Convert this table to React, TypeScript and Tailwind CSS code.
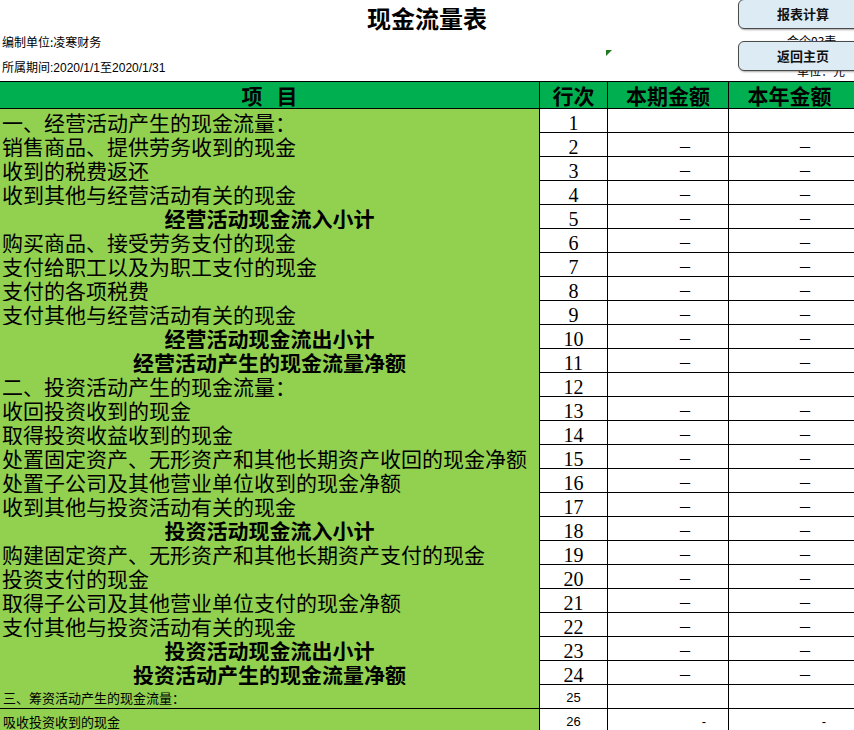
import React from "react";

type Row = {
	label: string;
	no: number;
	bold?: boolean;
	small?: boolean;
	dash?: boolean;
};

const rows: Row[] = [
	{ label: "一、经营活动产生的现金流量：", no: 1 },
	{ label: "销售商品、提供劳务收到的现金", no: 2, dash: true },
	{ label: "收到的税费返还", no: 3, dash: true },
	{ label: "收到其他与经营活动有关的现金", no: 4, dash: true },
	{ label: "经营活动现金流入小计", no: 5, bold: true, dash: true },
	{ label: "购买商品、接受劳务支付的现金", no: 6, dash: true },
	{ label: "支付给职工以及为职工支付的现金", no: 7, dash: true },
	{ label: "支付的各项税费", no: 8, dash: true },
	{ label: "支付其他与经营活动有关的现金", no: 9, dash: true },
	{ label: "经营活动现金流出小计", no: 10, bold: true, dash: true },
	{ label: "经营活动产生的现金流量净额", no: 11, bold: true, dash: true },
	{ label: "二、投资活动产生的现金流量：", no: 12 },
	{ label: "收回投资收到的现金", no: 13, dash: true },
	{ label: "取得投资收益收到的现金", no: 14, dash: true },
	{ label: "处置固定资产、无形资产和其他长期资产收回的现金净额", no: 15, dash: true },
	{ label: "处置子公司及其他营业单位收到的现金净额", no: 16, dash: true },
	{ label: "收到其他与投资活动有关的现金", no: 17, dash: true },
	{ label: "投资活动现金流入小计", no: 18, bold: true, dash: true },
	{ label: "购建固定资产、无形资产和其他长期资产支付的现金", no: 19, dash: true },
	{ label: "投资支付的现金", no: 20, dash: true },
	{ label: "取得子公司及其他营业单位支付的现金净额", no: 21, dash: true },
	{ label: "支付其他与投资活动有关的现金", no: 22, dash: true },
	{ label: "投资活动现金流出小计", no: 23, bold: true, dash: true },
	{ label: "投资活动产生的现金流量净额", no: 24, bold: true, dash: true },
	{ label: "三、筹资活动产生的现金流量：", no: 25, small: true },
	{ label: "吸收投资收到的现金", no: 26, small: true, dash: true },
];

const cjk = "font-['Noto_Sans_CJK_SC',sans-serif]";
const serif = "font-['Liberation_Serif','Noto_Sans_CJK_SC',serif]";
const sans = "font-['Liberation_Sans','Noto_Sans_CJK_SC',sans-serif]";

const SheetButton = ({ label, className }: { label: string; className: string }) => (
	<button
		className={`absolute left-[738px] w-[130px] rounded-[6px] border border-[#4a4a4a] bg-[#dcebf4] shadow-[1px_1px_2px_rgba(0,0,0,0.35)] flex items-center justify-center text-[13px] font-bold text-[#111] ${cjk} ${className}`}
	>
		{label}
	</button>
);

const TableRow = ({ row }: { row: Row }) => {
	const dashCls = row.small
		? `${sans} text-[13px] leading-none`
		: `${serif} text-[20px] leading-none`;
	return (
		<div className="grid grid-cols-[540px_68px_121px_125px] h-[24px] border-b border-black">
			<div
				className={`bg-[#92d050] border-r border-black flex items-center whitespace-nowrap text-black leading-none ${cjk} ${
					row.small
						? "text-[13px] pl-[3px] pt-[1px]"
						: row.bold
							? "text-[21px] font-bold justify-center pt-[3px]"
							: "text-[21px] pl-[2px] pt-[3px]"
				}`}
			>
				{row.label}
			</div>
			<div
				className={`border-r border-black flex items-center justify-center leading-none text-black ${
					row.small ? `${sans} text-[13px] pt-[1px]` : `${serif} text-[20px] pt-[3px]`
				}`}
			>
				{row.no}
			</div>
			<div
				className={`border-r border-black flex items-center justify-end ${dashCls} ${
					row.small ? "pr-[22px] pt-[2px]" : "pr-[38px] pt-[1px]"
				}`}
			>
				{row.dash ? (row.small ? "-" : "–") : ""}
			</div>
			<div
				className={`flex items-center justify-end ${dashCls} ${
					row.small ? "pr-[28px] pt-[2px]" : "pr-[44px] pt-[1px]"
				}`}
			>
				{row.dash ? (row.small ? "-" : "–") : ""}
			</div>
		</div>
	);
};

export default function App() {
	return (
		<div className="relative w-[854px] h-[730px] overflow-hidden bg-white text-black">
			{/* sheet heading */}
			<div className="h-[81px] flex flex-col">
				<div className={`h-[36px] flex items-center justify-center text-[24px] font-bold ${cjk}`}>
					现金流量表
				</div>
				<div className={`h-[12px] pl-[2px] flex items-center text-[12px] ${cjk}`}>
					编制单位:凌寒财务
				</div>
				<div className={`mt-[14px] h-[12px] pl-[2px] flex items-center text-[12px] ${sans}`}>
					所属期间:2020/1/1至2020/1/31
				</div>
			</div>

			<div className={`absolute left-[787px] top-[32px] text-[12px] ${cjk}`}>会企03表</div>
			<div className={`absolute left-[797px] top-[62px] text-[12px] ${cjk}`}>单位：元</div>

			<svg className="absolute left-[606px] top-[50px]" width="6" height="6" viewBox="0 0 6 6">
				<polygon points="0,0 6,0 0,6" fill="#1f7a1f" />
			</svg>

			<SheetButton label="报表计算" className="top-[-1px] h-[30px]" />
			<SheetButton label="返回主页" className="top-[41px] h-[30px]" />

			{/* table */}
			<div className="border-t border-black">
				<div
					className={`grid grid-cols-[540px_68px_121px_125px] h-[27px] border-b border-black bg-[#00b050] text-[21px] font-bold leading-none ${cjk}`}
				>
					<div className="border-r border-black flex items-center justify-center gap-[14px] pt-[1px]">
						<span>项</span>
						<span>目</span>
					</div>
					<div className="border-r border-black flex items-center justify-center pt-[1px]">行次</div>
					<div className="border-r border-black flex items-center justify-center pt-[1px]">本期金额</div>
					<div className="flex items-center justify-center pt-[1px] pr-[4px]">本年金额</div>
				</div>
				{rows.map((r) => (
					<TableRow key={r.no} row={r} />
				))}
			</div>
		</div>
	);
}
